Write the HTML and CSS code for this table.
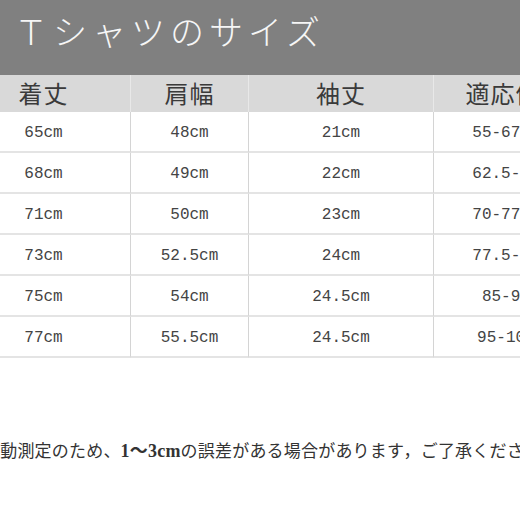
FILE: index.html
```html
<!DOCTYPE html>
<html lang="ja">
<head>
<meta charset="utf-8">
<title>Tシャツのサイズ</title>
<link rel="stylesheet" href="styles.css">
</head>
<body>
<div class="page">
  <div class="title-bar"><h1 class="title">Ｔシャツのサイズ</h1></div>
  <div class="table">
    <div class="th">着丈</div><div class="th">肩幅</div><div class="th">袖丈</div><div class="th th-last">適応体重</div>
    <div class="td">65cm</div><div class="td">48cm</div><div class="td">21cm</div><div class="td">55-67.5kg</div>
    <div class="td">68cm</div><div class="td">49cm</div><div class="td">22cm</div><div class="td">62.5-70kg</div>
    <div class="td">71cm</div><div class="td">50cm</div><div class="td">23cm</div><div class="td">70-77.5kg</div>
    <div class="td">73cm</div><div class="td">52.5cm</div><div class="td">24cm</div><div class="td">77.5-85kg</div>
    <div class="td">75cm</div><div class="td">54cm</div><div class="td">24.5cm</div><div class="td">85-95kg</div>
    <div class="td">77cm</div><div class="td">55.5cm</div><div class="td">24.5cm</div><div class="td">95-105kg</div>
  </div>
  <p class="note">自動測定のため、<b class="num">1～3cm</b>の誤差がある場合があります，ご了承ください。</p>
</div>
</body>
</html>
```

FILE: styles.css
```css
html, body {
  margin: 0;
  padding: 0;
  background: #ffffff;
}
.page {
  width: 520px;
  height: 520px;
  overflow: hidden;
  position: relative;
}
.title-bar {
  height: 75px;
  background: #808080;
  display: flex;
  align-items: center;
  padding-left: 14px;
  box-sizing: border-box;
}
.title {
  margin: 0;
  font-family: "Liberation Serif", "Noto Sans CJK JP", serif;
  font-weight: 300;
  font-size: 34px;
  letter-spacing: 5px;
  color: #f6f6f6;
  white-space: nowrap;
  line-height: 1;
  padding-bottom: 8px;
}
.table {
  display: grid;
  grid-template-columns: 174px 118px 185px 164px;
  grid-template-rows: 37px repeat(6, 41px);
  margin-left: -43px;
  width: 641px;
}
.th {
  background: #d9d9d9;
  display: flex;
  align-items: center;
  justify-content: center;
  font-family: "Noto Sans CJK JP", sans-serif;
  font-size: 24px;
  color: #3a3a3a;
  letter-spacing: 1px;
  border-right: 1px solid #e8e8e8;
  box-sizing: border-box;
  padding-bottom: 2px;
}
.td {
  display: flex;
  align-items: center;
  justify-content: center;
  font-family: "Liberation Mono", monospace;
  font-size: 16px;
  color: #444444;
  border-right: 1px solid #d4d4d4;
  border-bottom: 2px solid #e4e4e4;
  box-sizing: border-box;
  white-space: nowrap;
  padding-top: 3px;
}
.note {
  margin: 83px 0 0 -17px;
  font-family: "Liberation Serif", "Noto Sans CJK JP", serif;
  font-size: 17px;
  color: #333333;
  white-space: nowrap;
  letter-spacing: 0.2px;
  line-height: 20px;
}
.num {
  font-weight: bold;
  font-size: 18px;
}
```
